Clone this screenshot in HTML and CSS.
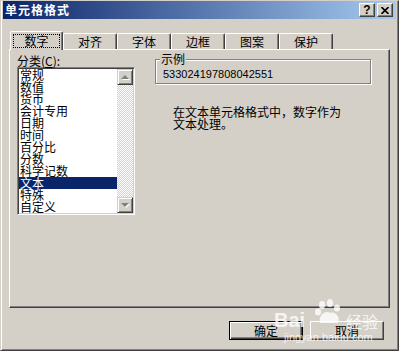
FILE: index.html
```html
<!DOCTYPE html>
<html lang="zh-CN">
<head>
    <meta charset="UTF-8">
    <title>单元格格式</title>
    <link rel="stylesheet" href="styles.css">
</head>
<body>
    <div class="window">
        <div class="titlebar">
            <span class="title">单元格格式</span>
            <div class="caption-buttons">
                <span class="cap-btn help">?</span>
                <span class="cap-btn close">
                    <svg width="8" height="7" viewBox="0 0 8 7"><path d="M0.5 0 L7.5 7 M7.5 0 L0.5 7" stroke="#000" stroke-width="1.6"/></svg>
                </span>
            </div>
        </div>

        <div class="tabs">
            <div class="tab active"><span class="focus">数字</span></div>
            <div class="tab">对齐</div>
            <div class="tab">字体</div>
            <div class="tab">边框</div>
            <div class="tab">图案</div>
            <div class="tab">保护</div>
        </div>

        <div class="panel">
            <div class="category">
                <div class="label">分类(<u>C</u>):</div>
                <div class="listbox">
                    <ul class="items">
                        <li>常规</li>
                        <li>数值</li>
                        <li>货币</li>
                        <li>会计专用</li>
                        <li>日期</li>
                        <li>时间</li>
                        <li>百分比</li>
                        <li>分数</li>
                        <li>科学记数</li>
                        <li class="selected">文本</li>
                        <li>特殊</li>
                        <li>自定义</li>
                    </ul>
                    <div class="scrollbar">
                        <div class="sb-btn"><span class="arrow up"></span></div>
                        <div class="sb-track"></div>
                        <div class="sb-btn"><span class="arrow down"></span></div>
                    </div>
                </div>
            </div>

            <div class="details">
                <div class="groupbox">
                    <span class="legend">示例</span>
                    <div class="sample">533024197808042551</div>
                </div>
                <p class="desc">在文本单元格格式中，数字作为<br>文本处理。</p>
            </div>
        </div>

        <div class="actions">
            <button class="btn default">确定</button>
            <button class="btn">取消</button>
        </div>

        <!-- watermark -->
        <div class="watermark">
            <span class="wm-bai">Bai</span>
            <svg class="wm-paw" width="30" height="26" viewBox="0 0 30 26">
                <ellipse cx="8" cy="6" rx="3" ry="4"/>
                <ellipse cx="16" cy="4" rx="3" ry="4"/>
                <ellipse cx="23" cy="9" rx="3" ry="3.5"/>
                <ellipse cx="4" cy="13" rx="3" ry="3.5"/>
                <path d="M6 24 C4 16 12 11 16 14 C21 12 27 18 24 24 Z"/>
            </svg>
            <span class="wm-jy">经验</span>
            <span class="wm-url">jingyan.baidu.com</span>
        </div>
    </div>
</body>
</html>
```

FILE: styles.css
```css
* {
    box-sizing: border-box;
}
body {
    margin: 0;
    background-color: #d4d0c8;
    font-family: "Noto Sans CJK SC", sans-serif;
    font-size: 12px;
    color: #000;
}
.window {
    position: relative;
    width: 399px;
    height: 351px;
    background-color: #d4d0c8;
    border: 1px solid;
    border-color: #d4d0c8 #404040 #404040 #d4d0c8;
    box-shadow: inset 1px 0 #fff, inset -1px -1px #808080;
    padding: 0 2px;
    overflow: hidden;
}
.titlebar {
    height: 18px;
    display: flex;
    align-items: center;
    justify-content: space-between;
    padding: 0 3px 0 2px;
    background: linear-gradient(to right, #0a246a, #a6caf0);
}
.title {
    color: #fff;
    font-weight: bold;
    font-size: 12px;
    letter-spacing: 1px;
    line-height: 12px;
}
.caption-buttons {
    display: flex;
    gap: 2px;
}
.cap-btn {
    width: 16px;
    height: 14px;
    display: flex;
    align-items: center;
    justify-content: center;
    background-color: #d4d0c8;
    border: 1px solid;
    border-color: #fff #404040 #404040 #fff;
    box-shadow: inset -1px -1px #808080;
}
.help {
    font-family: "Liberation Sans", sans-serif;
    font-weight: bold;
    font-size: 12px;
    line-height: 12px;
}

/* tabs */
.tabs {
    display: flex;
    align-items: flex-end;
    margin-top: 12px;
    margin-bottom: -1px;
    padding-left: 7px;
}
.tab {
    width: 54px;
    height: 16px;
    margin-bottom: 1px;
    padding-top: 2px;
    text-align: center;
    line-height: 12px;
    background-color: #d4d0c8;
    border: 1px solid;
    border-bottom: none;
    border-color: #fff #404040 #fff #fff;
    box-shadow: inset -1px 0 #808080;
    border-radius: 2px 2px 0 0;
}
.tab.active {
    position: relative;
    z-index: 1;
    width: 53px;
    height: 19px;
    margin-bottom: 0;
}
.focus {
    display: block;
    width: 47px;
    height: 14px;
    margin: 0 auto;
    border: 1px dotted #000;
    line-height: 12px;
}

/* panel */
.panel {
    display: flex;
    height: 259px;
    margin: 0 6px;
    padding: 4px 0 0 7px;
    border: 1px solid;
    border-color: #fff #404040 #404040 #fff;
    box-shadow: inset -1px -1px #808080;
}
.category {
    width: 118px;
}
.label {
    line-height: 13px;
}
.listbox {
    display: flex;
    height: 148px;
    padding: 1px;
    background-color: #fff;
    border: 1px solid;
    border-color: #808080 #fff #fff #808080;
    box-shadow: inset 1px 1px #404040, inset -1px -1px #d4d0c8;
}
.items {
    flex: 1;
    margin: 0;
    padding: 0;
    list-style: none;
    line-height: 12px;
}
.items li {
    height: 12px;
    padding-left: 1px;
    white-space: nowrap;
}
.items li.selected {
    background-color: #0a246a;
    color: #fff;
}
.scrollbar {
    width: 16px;
    display: flex;
    flex-direction: column;
}
.sb-btn {
    height: 16px;
    display: flex;
    align-items: center;
    justify-content: center;
    background-color: #d4d0c8;
    border: 1px solid;
    border-color: #d4d0c8 #404040 #404040 #d4d0c8;
    box-shadow: inset 1px 1px #fff, inset -1px -1px #808080;
}
.sb-track {
    flex: 1;
    background-color: #fff;
    background-image: repeating-conic-gradient(#d4d0c8 0 25%, #fff 0 50%);
    background-size: 2px 2px;
}
.arrow {
    width: 0;
    height: 0;
    border-left: 4px solid transparent;
    border-right: 4px solid transparent;
    filter: drop-shadow(1px 1px 0 #fff);
}
.arrow.up {
    border-bottom: 4px solid #808080;
}
.arrow.down {
    border-top: 4px solid #808080;
}

.details {
    width: 217px;
    margin-left: 20px;
}
.groupbox {
    width: 216px;
    margin-top: 5px;
    padding: 0 0 2px 7px;
    border: 1px solid #808080;
    box-shadow: inset 1px 1px #fff, 1px 1px #fff;
}
.legend {
    display: block;
    width: fit-content;
    margin: -7px 0 0 -3px;
    padding: 0 1px;
    line-height: 12px;
    background-color: #d4d0c8;
}
.sample {
    margin-top: 3px;
    font-family: "Liberation Sans", sans-serif;
    font-size: 11px;
    line-height: 13px;
}
.desc {
    margin: 22px 0 0 18px;
    line-height: 12px;
}

/* buttons */
.actions {
    display: flex;
    justify-content: flex-end;
    gap: 7px;
    margin-top: 13px;
    padding-right: 12px;
}
.btn {
    width: 74px;
    height: 19px;
    padding: 0;
    font-family: inherit;
    font-size: 12px;
    line-height: 12px;
    color: #000;
    background-color: #d4d0c8;
    border: 1px solid;
    border-color: #fff #404040 #404040 #fff;
    box-shadow: inset -1px -1px #808080;
}
.btn.default {
    border-color: #000;
    box-shadow: inset 1px 1px #fff, inset -1px -1px #404040, inset -2px -2px #808080;
}

.watermark {
    position: absolute;
    left: 265px;
    top: 296px;
    width: 120px;
    height: 48px;
    color: rgba(255, 255, 255, 0.8);
    pointer-events: none;
}
.wm-bai {
    position: absolute;
    left: 8px;
    top: 12px;
    font-family: "Liberation Sans", sans-serif;
    font-weight: bold;
    font-size: 20px;
}
.wm-paw {
    position: absolute;
    left: 48px;
    top: 2px;
    fill: rgba(255, 255, 255, 0.8);
}
.wm-jy {
    position: absolute;
    left: 80px;
    top: 12px;
    font-size: 16px;
}
.wm-url {
    position: absolute;
    left: 18px;
    top: 34px;
    font-family: "Liberation Sans", sans-serif;
    font-size: 11px;
}
```
